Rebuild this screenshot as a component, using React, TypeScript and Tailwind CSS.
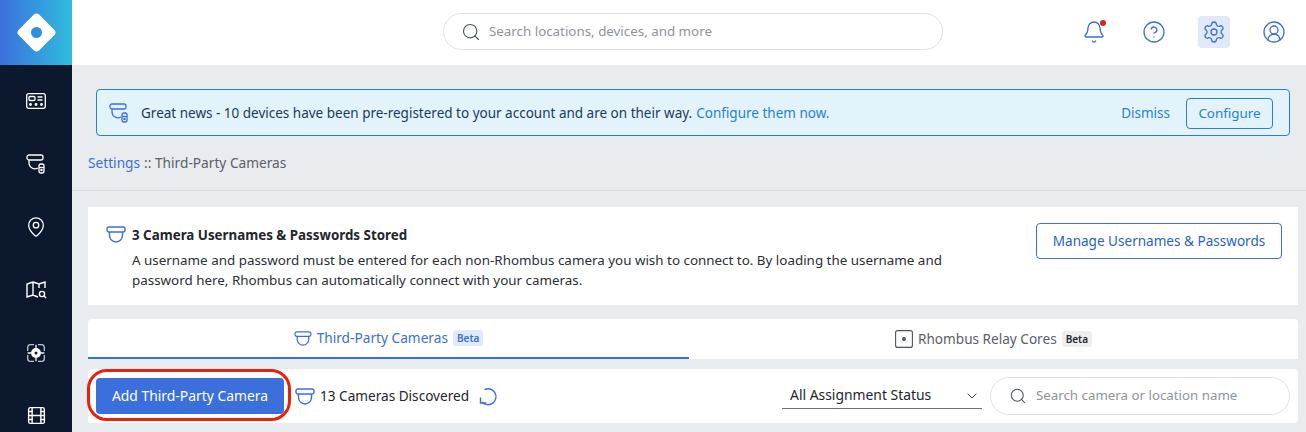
import { Search, ChevronDown, MapPin, Film, Settings, CircleHelp, Bell, CircleUserRound } from 'lucide-react';

const FONT = 'font-["Noto_Sans",sans-serif]';

function DomeIcon({ className = '' }: { className?: string }) {
  return (
    <svg viewBox="0 0 20 17" fill="none" stroke="currentColor" strokeWidth="1.4" className={className}>
      <rect x="1" y="1" width="18" height="5" rx="2" />
      <path d="M3.5 6v3.5a6.5 6.5 0 0 0 13 0V6" />
    </svg>
  );
}

function DomeBatteryIcon({ className = '' }: { className?: string }) {
  return (
    <svg viewBox="0 0 20 20" fill="none" stroke="currentColor" strokeWidth="1.3" className={className}>
      <rect x="1" y="1" width="16" height="5" rx="2" />
      <path d="M3 6v3a6 6 0 0 0 9 5" />
      <rect x="13" y="10" width="5" height="9" rx="2" />
      <path d="M13 13.5h5" />
      <circle cx="15.5" cy="16" r="0.6" fill="currentColor" />
    </svg>
  );
}

function PanelIcon() {
  return (
    <svg viewBox="0 0 20 16" fill="none" stroke="currentColor" strokeWidth="1.3" className="h-4 w-5">
      <rect x="0.7" y="0.7" width="18.6" height="14.6" rx="2" />
      <rect x="3" y="3.5" width="6" height="4" rx="1" />
      <path d="M11.5 4h5M11.5 7h5" />
      <circle cx="4.5" cy="11.5" r="0.8" />
      <circle cx="10" cy="11.5" r="0.8" />
      <circle cx="15.5" cy="11.5" r="0.8" />
    </svg>
  );
}

function MapSearchIcon() {
  return (
    <svg viewBox="0 0 21 19" fill="none" stroke="currentColor" strokeWidth="1.4" className="h-[19px] w-[21px]">
      <path d="M7 2 1 4v13l6-2 5 2M7 2l6 2 6-2v6M7 2v13M13 4v4" />
      <circle cx="16" cy="14" r="2.6" />
      <path d="m18 16 2 2" />
    </svg>
  );
}

function VideoTargetIcon() {
  return (
    <svg viewBox="0 0 18 18" fill="none" stroke="currentColor" strokeWidth="1.3" className="h-[18px] w-[18px]">
      <path d="M7 .7H3.2a2.5 2.5 0 0 0-2.5 2.5V7M11 .7h3.8a2.5 2.5 0 0 1 2.5 2.5V7M7 17.3H3.2a2.5 2.5 0 0 1-2.5-2.5V11M11 17.3h3.8a2.5 2.5 0 0 0 2.5-2.5V11" opacity="0.75" />
      <path d="M9 .7V4M9 14v3.3M.7 9H4M14 9h3.3" />
      <circle cx="9" cy="9" r="5" fill="currentColor" stroke="none" />
      <circle cx="9" cy="9" r="1.5" fill="#0b182e" stroke="none" />
    </svg>
  );
}

function RelayIcon() {
  return (
    <svg viewBox="0 0 18 18" fill="none" stroke="#4b5563" strokeWidth="1.1" className="h-[18px] w-[18px]">
      <rect x="0.6" y="0.6" width="16.8" height="16.8" rx="2" />
      <circle cx="9" cy="9" r="1.4" fill="#4b5563" />
    </svg>
  );
}

function RefreshIcon() {
  return (
    <svg viewBox="0 0 20 20" fill="none" stroke="currentColor" strokeWidth="1.4" className="h-5 w-5 text-[#3b6fdc]">
      <path d="M5.5 3.5A8 8 0 1 1 3 16" />
      <path d="M1.5 11.5V17h6" />
    </svg>
  );
}

function SideItem({ children }: { children: React.ReactNode }) {
  return <div className="flex h-[63px] shrink-0 items-center justify-center text-white">{children}</div>;
}

export default function App() {
  return (
    <div className={`flex h-[432px] w-full overflow-hidden bg-[#e9ecef] ${FONT}`}>
      {/* Sidebar */}
      <aside className="flex w-[72px] shrink-0 flex-col bg-[#0b182e]">
        <div className="flex h-[65px] shrink-0 items-center justify-center bg-gradient-to-r from-[#3b6fdc] to-[#2fbcdd]">
          <div className="flex h-[29px] w-[29px] rotate-45 items-center justify-center rounded-[4px] bg-white">
            <div className="h-[11px] w-[11px] rounded-full bg-[#2e8fdc]" />
          </div>
        </div>
        <div className="flex shrink-0 flex-col pt-[4px]">
          <SideItem><PanelIcon /></SideItem>
          <SideItem><DomeBatteryIcon className="h-5 w-5" /></SideItem>
          <SideItem><MapPin size={22} strokeWidth={1.4} /></SideItem>
          <SideItem><MapSearchIcon /></SideItem>
          <SideItem><VideoTargetIcon /></SideItem>
          <SideItem><Film size={21} strokeWidth={1.6} /></SideItem>
        </div>
      </aside>

      <div className="flex min-w-0 flex-1 flex-col">
        {/* Top bar */}
        <header className="flex h-[65px] shrink-0 items-center bg-white pb-[2px]">
          <div className="ml-[371px] flex h-[37px] w-[500px] items-center rounded-full border border-[#dfe1e6] pl-[17px] text-[13.35px] text-[#8f949b]">
            <Search size={20} strokeWidth={1.4} className="mr-[8px] text-[#4b5563]" />
            Search locations, devices, and more
          </div>
          <div className="ml-auto mr-[16px] flex items-center gap-[28px] text-[#3b6fdc]">
            <div className="relative flex h-8 w-8 items-center justify-center">
              <Bell size={24} strokeWidth={1.3} />
              <span className="absolute right-[4px] top-[4px] h-[6px] w-[6px] rounded-full bg-[#d0281c]" />
            </div>
            <div className="flex h-8 w-8 items-center justify-center"><CircleHelp size={24} strokeWidth={1.3} /></div>
            <div className="flex h-8 w-8 items-center justify-center rounded-[4px] bg-[#e0eafa]"><Settings size={24} strokeWidth={1.3} /></div>
            <div className="flex h-8 w-8 items-center justify-center"><CircleUserRound size={24} strokeWidth={1.3} /></div>
          </div>
        </header>

        {/* Banner */}
        <div className="ml-[24px] mr-[16px] mt-[24px] flex h-[47px] shrink-0 items-center rounded-[4px] border border-[#2b7fd0] bg-[#e2f3fc] pl-[12px] pr-[16px]">
          <DomeBatteryIcon className="mr-[12px] h-[20px] w-[20px] text-[#3b6fdc]" />
          <span className="pt-[1px] text-[13.5px] text-[#1d3a5a]">Great news - 10 devices have been pre-registered to your account and are on their way.</span>
          <span className="ml-[4px] pt-[1px] text-[13.5px] text-[#2b7fd0]">Configure them now.</span>
          <span className="ml-auto mr-[16px] pt-[1px] text-[13.5px] text-[#2b7fd0]">Dismiss</span>
          <button className="mt-[2px] h-[31px] w-[87px] rounded-[4px] border border-[#2b7fd0] text-[13.4px] text-[#2b7fd0]">Configure</button>
        </div>

        {/* Breadcrumb */}
        <div className="mx-[16px] flex h-[54px] shrink-0 items-center text-[13.7px] text-[#5a6068]">
          <span className="text-[#3b6fdc]">Settings</span>
          <span className="ml-[4px]">:: Third-Party Cameras</span>
        </div>
        <div className="h-px shrink-0 bg-[#d8dce1]" />

        <main className="flex flex-col pl-[16px] pr-[8px] pt-[16px]">
          {/* Credentials card */}
          <section className="flex h-[98px] items-start bg-white pl-[18px] pr-[16px] pt-[16px]">
            <DomeIcon className="mt-[3px] h-[17px] w-5 shrink-0 text-[#3b6fdc]" />
            <div className="ml-[6px] mt-[2px] w-[830px] text-[13.4px] leading-[20px] text-[#2a2f36]">
              <div className="mb-[5px] text-[13.35px] font-bold text-[#22262c]">3 Camera Usernames &amp; Passwords Stored</div>
              A username and password must be entered for each non-Rhombus camera you wish to connect to. By loading the username and password here, Rhombus can automatically connect with your cameras.
            </div>
            <button className="ml-auto h-[36px] w-[246px] rounded-[4px] border border-[#3b6fdc] text-[13.55px] text-[#2a5fcb]">Manage Usernames &amp; Passwords</button>
          </section>

          {/* Tabs */}
          <div className="mt-[14px] flex h-[40px] rounded-t-[4px] bg-white">
            <div className="flex w-[601px] items-center justify-center gap-[5px] border-b-2 border-[#3b6fdc] text-[13.7px] text-[#3b6fdc]">
              <DomeIcon className="h-[15px] w-[18px]" />
              Third-Party Cameras
              <span className="rounded-[3px] bg-[#e0eafa] px-[4px] text-[10px] font-semibold leading-[16px]">Beta</span>
            </div>
            <div className="flex flex-1 items-center justify-center gap-[5px] text-[13.6px] text-[#5a6068]">
              <RelayIcon />
              Rhombus Relay Cores
              <span className="rounded-[3px] bg-[#eceef0] px-[4px] text-[10px] font-semibold leading-[16px] text-[#22262c]">Beta</span>
            </div>
          </div>

          {/* Toolbar */}
          <div className="relative mt-[10px] flex h-[54px] items-center rounded-[4px] bg-white px-[8px]">
            <button className="h-[36px] w-[188px] rounded-[4px] bg-[#3b6fdc] text-[13.9px] text-white">Add Third-Party Camera</button>
            <div className="pointer-events-none absolute left-[-1px] top-0 h-[52px] w-[204px] rounded-[20px] border-[3px] border-[#e8200c]" />
            <DomeIcon className="ml-[11px] h-[17px] w-5 text-[#3b6fdc]" />
            <span className="ml-[5px] text-[13.6px] text-[#22262c]">13 Cameras Discovered</span>
            <div className="ml-[10px]"><RefreshIcon /></div>
            <div className="ml-auto flex h-[26px] w-[200px] items-center justify-between border-b border-[#6b7280] pl-[8px] pr-[2px] text-[13.9px] text-[#22262c]">
              All Assignment Status
              <ChevronDown size={16} strokeWidth={1.3} />
            </div>
            <div className="ml-[8px] flex h-[38px] w-[300px] items-center rounded-full border border-[#dfe1e6] pl-[18px] text-[13.3px] text-[#8f949b]">
              <Search size={18} strokeWidth={1.4} className="mr-[9px] text-[#4b5563]" />
              Search camera or location name
            </div>
          </div>
        </main>
      </div>
    </div>
  );
}
